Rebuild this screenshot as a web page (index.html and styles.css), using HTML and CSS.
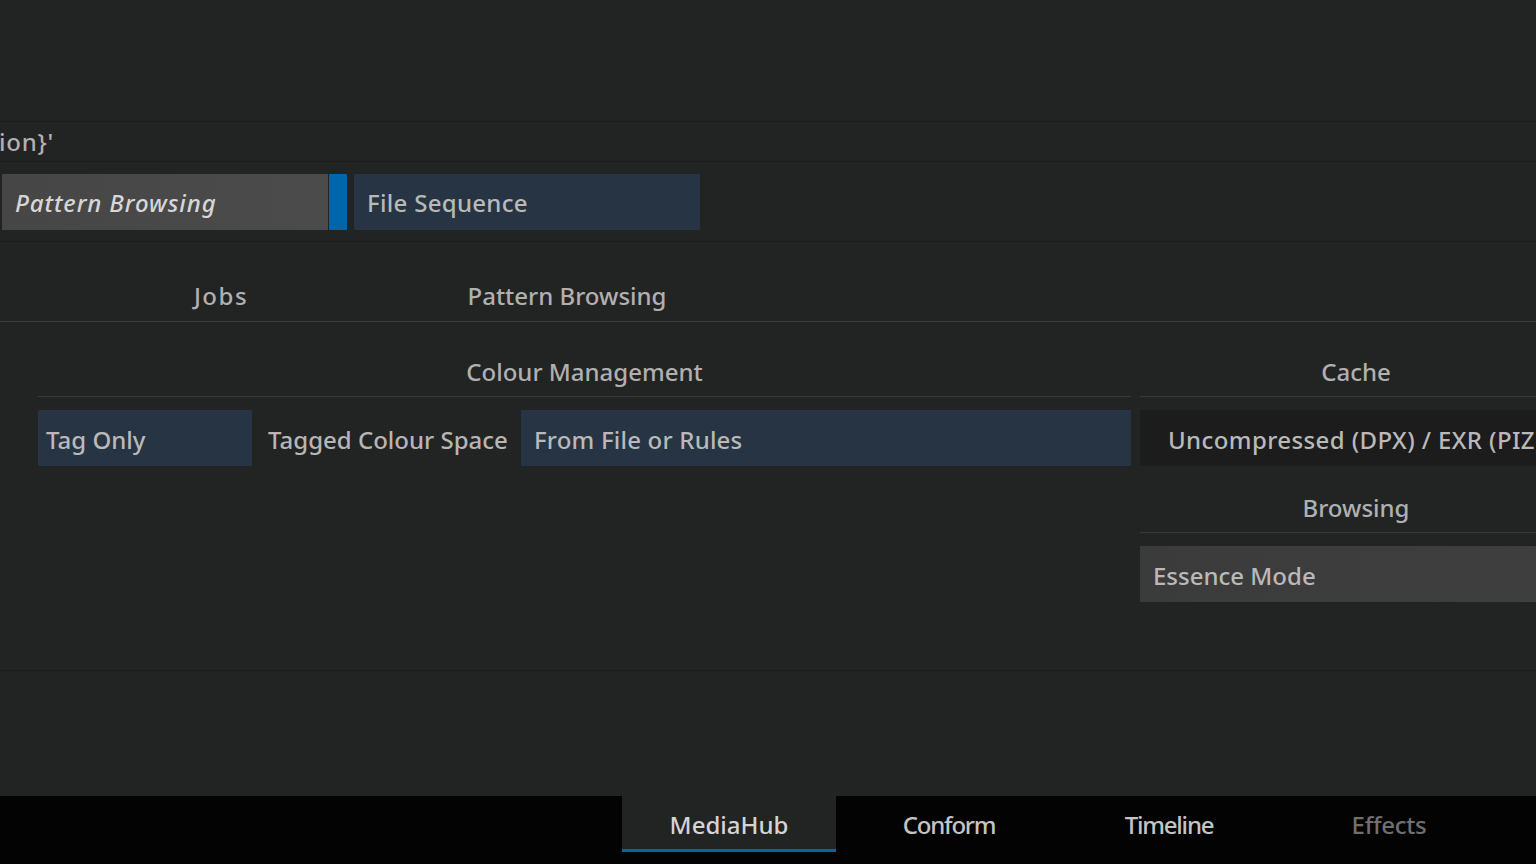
FILE: index.html
```html
<!DOCTYPE html>
<html>
<head>
<meta charset="utf-8">
<link rel="stylesheet" href="styles.css">
</head>
<body>
<div class="page">
  <div class="top"></div>
  <div class="path-row"><span class="path">ion}'</span></div>
  <div class="type-row">
    <div class="btn btn-grey btn-italic btn-pattern">Pattern Browsing</div>
    <div class="accent"></div>
    <div class="btn btn-blue btn-seq">File Sequence</div>
  </div>
  <div class="tab-heads">
    <div class="head head-jobs">Jobs</div>
    <div class="head head-pattern">Pattern Browsing</div>
  </div>
  <div class="settings">
    <div class="section colour">
      <div class="sec-head">Colour Management</div>
      <div class="sec-body">
        <div class="btn btn-blue btn-tag">Tag Only</div>
        <div class="label">Tagged Colour Space</div>
        <div class="btn btn-blue btn-from">From File or Rules</div>
      </div>
    </div>
    <div class="section cache">
      <div class="sec-head">Cache</div>
      <div class="btn btn-dark btn-cache">Uncompressed (DPX) / EXR (PIZ)</div>
      <div class="sec-head sec-head-2">Browsing</div>
      <div class="btn btn-grey2 btn-essence">Essence Mode</div>
    </div>
  </div>
  <div class="lower"></div>
  <div class="bottom-bar">
    <div class="tabs">
      <div class="tab active">MediaHub</div>
      <div class="tab">Conform</div>
      <div class="tab">Timeline</div>
      <div class="tab disabled">Effects</div>
    </div>
  </div>
</div>
</body>
</html>
```

FILE: styles.css
```css
html, body {
  margin: 0;
  padding: 0;
  background: #222323;
  overflow: hidden;
}
.page {
  width: 1536px;
  height: 864px;
  display: flex;
  flex-direction: column;
  font-family: "Noto Sans", "DejaVu Sans", sans-serif;
  font-size: 24px;
  font-weight: 500;
  color: #b6b6b6;
  overflow: hidden;
}
.top {
  height: 121px;
  border-bottom: 1px solid #1a1b1b;
}
.path-row {
  height: 39px;
  border-bottom: 1px solid #1a1b1b;
  display: flex;
  align-items: center;
}
.path {
  margin-left: -1px;
  color: #b0b0b0;
  letter-spacing: 0.8px;
}
.type-row {
  height: 79px;
  border-bottom: 1px solid #1a1b1b;
  display: flex;
  align-items: center;
  padding-left: 2px;
}
.btn {
  height: 56px;
  display: flex;
  align-items: center;
  padding-left: 13px;
  padding-top: 2px;
  box-sizing: border-box;
  border-radius: 1px;
  white-space: nowrap;
  color: #b9b9b9;
  flex-shrink: 0;
  overflow: hidden;
}
.btn-grey {
  background: linear-gradient(90deg, #464646, #4b4b4b);
  color: #d6d6d6;
}
.btn-grey2 {
  background: linear-gradient(90deg, #3b3b3b, #3f3f3f);
}
.btn-blue {
  background: #263443;
}
.btn-dark {
  background: #1c1c1c;
}
.btn-italic {
  font-style: italic;
  letter-spacing: 0.9px;
}
.btn-pattern {
  width: 326px;
}
.accent {
  width: 18px;
  height: 56px;
  background: #0065a9;
  border-radius: 1px;
  margin-left: 1px;
}
.btn-seq {
  width: 346px;
  margin-left: 7px;
  letter-spacing: 0.3px;
}
.tab-heads {
  border-bottom: 1px solid #3a3a3a;
  display: flex;
  align-items: flex-start;
  padding-top: 37px;
  box-sizing: border-box;
  height: 80px;
}
.head {
  text-align: center;
  color: #b0b0b0;
}
.head-jobs {
  width: 442px;
  letter-spacing: 1.5px;
}
.head-pattern {
  width: 250px;
}
.settings {
  display: flex;
  padding-left: 38px;
  padding-top: 25px;
  gap: 9px;
  height: 349px;
  box-sizing: border-box;
  border-bottom: 1px solid #1a1b1b;
}
.section {
  display: flex;
  flex-direction: column;
  flex-shrink: 0;
}
.colour {
  width: 1093px;
}
.cache {
  width: 432px;
}
.sec-head {
  height: 49px;
  border-bottom: 1px solid #3a3a3a;
  display: flex;
  align-items: center;
  justify-content: center;
  color: #b0b0b0;
  margin-bottom: 13px;
}
.sec-head-2 {
  margin-top: 17px;
}
.sec-body {
  display: flex;
  align-items: center;
}
.btn-tag {
  width: 214px;
  padding-left: 8px;
}
.label {
  margin-left: 16px;
  width: 254px;
  color: #b6b6b6;
  padding-top: 2px;
}
.btn-from {
  width: 610px;
  letter-spacing: 0.2px;
}
.btn-cache {
  width: 432px;
  padding-left: 28px;
  letter-spacing: 0.4px;
}
.btn-essence {
  width: 432px;
}
.lower {
  flex: 1;
}
.bottom-bar {
  height: 68px;
  background: #030303;
  display: flex;
  padding-left: 622px;
}
.tabs {
  display: flex;
  gap: 6px;
}
.tab {
  width: 214px;
  height: 56px;
  display: flex;
  align-items: center;
  justify-content: center;
  color: #c4c4c4;
  box-sizing: border-box;
  letter-spacing: -1.2px;
}
.tab.active {
  background: #222323;
  border-bottom: 3px solid #0066aa;
  padding-top: 3px;
  color: #d4d4d4;
  letter-spacing: 0;
}
.tab.disabled {
  color: #6f6f6f;
  letter-spacing: -0.3px;
}
```
